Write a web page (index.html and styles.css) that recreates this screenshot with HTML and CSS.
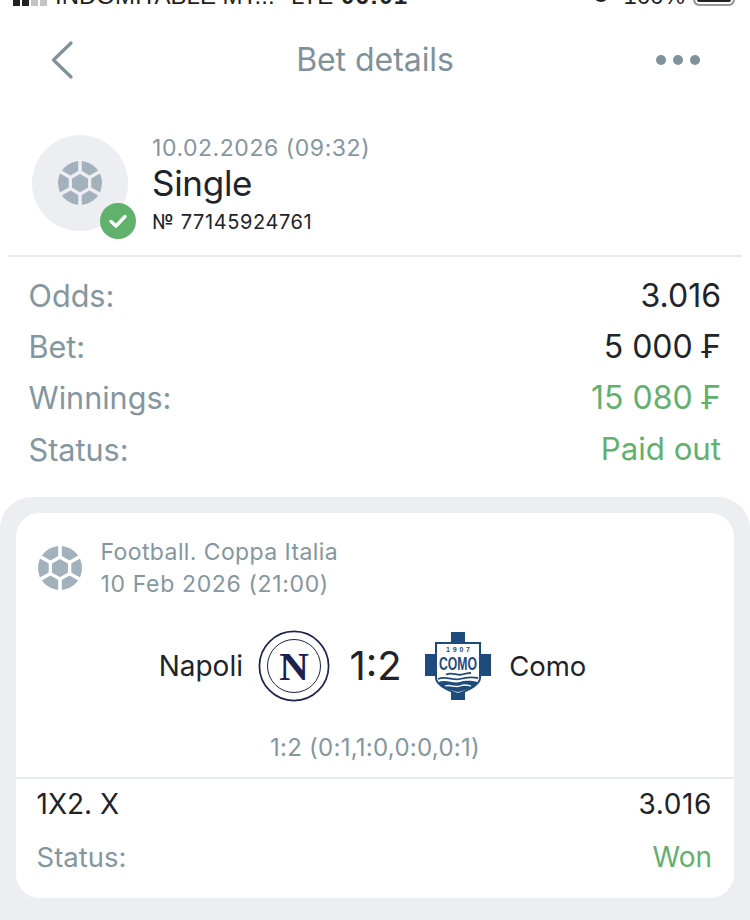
FILE: index.html
```html
<!DOCTYPE html>
<html lang="en">
<head>
<meta charset="utf-8">
<title>Bet details</title>
<link rel="stylesheet" href="styles.css">
</head>
<body>
<svg class="defs" width="0" height="0" aria-hidden="true">
  <symbol id="ball" viewBox="0 0 44 44">
    <circle cx="22" cy="22" r="22" fill="#a3b1bc"/>
    <path class="gaps" d="M22 0V11M22 33V44M2 10.5L12.5 16.5M2 33.5L12.5 27.5M42 10.5L31.5 16.5M42 33.5L31.5 27.5M22 11L31.5 16.5V27.5L22 33L12.5 27.5V16.5Z" fill="none" stroke="currentColor" stroke-width="3.6"/>
    <path d="M22 13.5L30 18V26.5L22 31L14 26.5V18Z" fill="#a3b1bc"/>
  </symbol>
</svg>

<div class="statusbar">
  <span class="signal"><i></i><i></i><i class="dim"></i><i class="dim"></i></span>
  <span class="carrier">INDOMITABLE MT...</span>
  <span class="lte">LTE</span>
  <span class="clock">06:01</span>
  <span class="spacer"></span>
  <svg class="alarm" width="16" height="20" viewBox="0 0 16 20"><circle cx="8" cy="8" r="7" fill="none" stroke="#222" stroke-width="2"/></svg>
  <span class="pct">100%</span>
  <span class="battery"></span>
</div>

<header class="topbar">
  <svg class="back" width="24" height="38" viewBox="0 0 24 38"><path d="M21 2L3.5 19L21 36" fill="none" stroke="#7f929c" stroke-width="3.2" stroke-linecap="round" stroke-linejoin="round"/></svg>
  <h1 class="title">Bet details</h1>
  <span class="dots"><i></i><i></i><i></i></span>
</header>

<section class="summary">
  <div class="avatar">
    <svg class="ball avatar-ball" width="44" height="44"><use href="#ball"/></svg>
    <span class="badge">
      <svg width="20" height="16" viewBox="0 0 20 16"><path d="M3 8.5L8 13L17 3.5" fill="none" stroke="#fff" stroke-width="3.4" stroke-linecap="round" stroke-linejoin="round"/></svg>
    </span>
  </div>
  <div class="summary-text">
    <div class="date">10.02.2026 (09:32)</div>
    <div class="type">Single</div>
    <div class="number">№ 77145924761</div>
  </div>
</section>

<dl class="facts">
  <div class="fact"><dt>Odds:</dt><dd>3.016</dd></div>
  <div class="fact"><dt>Bet:</dt><dd>5 000 ₣</dd></div>
  <div class="fact"><dt>Winnings:</dt><dd class="green">15 080 ₣</dd></div>
  <div class="fact"><dt>Status:</dt><dd class="green paid">Paid out</dd></div>
</dl>

<section class="panel">
  <article class="card">
    <div class="league">
      <svg class="ball" width="44" height="44"><use href="#ball"/></svg>
      <div class="league-text">
        <div>Football. Coppa Italia</div>
        <div class="league-date">10 Feb 2026 (21:00)</div>
      </div>
    </div>

    <div class="match">
      <span class="team">Napoli</span>
      <svg class="logo-n" width="72" height="72" viewBox="0 0 72 72">
        <circle cx="36" cy="36" r="34.6" fill="#fff" stroke="#1c2150" stroke-width="1.7"/>
        <circle cx="36" cy="36" r="26.5" fill="#fff" stroke="#1c2150" stroke-width="1"/>
        <text x="36" y="50" text-anchor="middle" class="logo-n-letter">N</text>
      </svg>
      <span class="score">1:2</span>
      <svg class="logo-c" width="66" height="68" viewBox="0 0 66 68">
        <path d="M26 0H40V22H66V44H40V68H26V44H0V22H26Z" fill="#1f4a7c"/>
        <path d="M11 11H55V46C55 53 44 58 33 62C22 58 11 53 11 46Z" fill="#fff" stroke="#1f4a7c" stroke-width="2"/>
        <text x="33" y="19.5" text-anchor="middle" class="logo-c-year" textLength="24">1907</text>
        <text x="33" y="37.5" text-anchor="middle" class="logo-c-name" textLength="38" lengthAdjust="spacingAndGlyphs">COMO</text>
        <path d="M21 42.5C27 39.5 32 44 37 42.5S43 41 46 41M13 47C21 43.5 28 49 35 47S47 45 53 46" fill="none" stroke="#1f4a7c" stroke-width="1.8"/>
        <path d="M13 50C22 47 28 52 35 50S47 49 53 50C52 54 42 58 33 60C24 58 14 54 13 50Z" fill="#1f4a7c"/>
        <path d="M20 54C26 52 30 56 35 54S42 53 46 54" fill="none" stroke="#fff" stroke-width="1.3"/>
      </svg>
      <span class="team team-away">Como</span>
    </div>

    <div class="periods">1:2 (0:1,1:0,0:0,0:1)</div>

    <div class="outcome">
      <div class="outcome-row"><span>1X2. X</span><span class="odds">3.016</span></div>
      <div class="outcome-row"><span class="muted">Status:</span><span class="green">Won</span></div>
    </div>
  </article>
</section>
</body>
</html>
```

FILE: styles.css
```css
* { box-sizing: border-box; }
html, body { margin: 0; padding: 0; }
body {
  width: 750px;
  height: 920px;
  overflow: hidden;
  background: #fff;
  color: #20242a;
  font-family: Inter, "Liberation Sans", sans-serif;
}
.defs { display: block; height: 0; }
i { display: block; }

.statusbar {
  height: 6px;
  overflow: hidden;
  display: flex;
  align-items: flex-end;
  padding: 0 15px 0 13px;
  font-family: "Liberation Sans", sans-serif;
  font-size: 24px;
  line-height: 20px;
  color: #222;
  white-space: nowrap;
}
.statusbar > span, .statusbar > svg { flex: none; }
.signal { display: flex; gap: 2px; align-items: flex-end; height: 20px; margin-right: 8px; }
.signal i { width: 7px; height: 20px; background: #222; }
.signal i.dim { background: #c4c4c4; }
.carrier { width: 215px; }
.lte { margin-left: 21px; width: 33px; }
.clock { margin-left: 17px; font-weight: 700; letter-spacing: 1.2px; }
.spacer { flex: 1 !important; }
.alarm { margin-right: 15px; }
.pct { margin-right: 8px; }
.battery {
  width: 42px;
  height: 20px;
  border: 2px solid #999;
  border-radius: 6px;
  background: #222;
  box-shadow: inset 0 0 0 2px #fff;
}

.topbar {
  height: 107px;
  padding: 0 50px;
  display: grid;
  grid-template-columns: 1fr auto 1fr;
  align-items: center;
}
.title {
  margin: 0;
  font-size: 32px;
  font-weight: 400;
  letter-spacing: -0.05px;
  color: #7f929c;
}
.dots { display: flex; gap: 7px; justify-content: flex-end; }
.dots i { width: 10px; height: 10px; border-radius: 50%; background: #7f929c; }

.summary {
  margin: 22px 8px 0;
  padding: 0 0 0 24px;
  height: 122px;
  display: flex;
  gap: 24px;
  border-bottom: 2px solid #e8eaed;
}
.avatar {
  position: relative;
  flex: none;
  width: 96px;
  height: 96px;
  border-radius: 50%;
  background: #eceef2;
  display: flex;
  align-items: center;
  justify-content: center;
}
.ball { flex: none; color: #fff; }
.avatar-ball { color: #eceef2; }
.badge {
  position: absolute;
  left: 68px;
  top: 68px;
  width: 36px;
  height: 36px;
  border-radius: 50%;
  background: #5fb16b;
  display: flex;
  align-items: center;
  justify-content: center;
}
.summary-text { display: flex; flex-direction: column; margin-top: -1px; }
.date { font-size: 23px; line-height: 28px; letter-spacing: 0.55px; color: #84969f; }
.type { font-size: 35px; line-height: 42px; letter-spacing: -0.3px; }
.number { font-size: 20px; line-height: 30px; letter-spacing: 0.6px; margin-top: 3px; }

.facts {
  margin: 13px 0 0;
  padding: 0 29px 0 28.5px;
  display: flex;
  flex-direction: column;
}
.fact {
  height: 51.2px;
  display: flex;
  justify-content: space-between;
  align-items: center;
  font-size: 30.6px;
}
.fact dt { color: #84969f; }
.fact dd { margin: 0; font-size: 32px; }
.fact dd.paid { font-size: 31.2px; }
.green { color: #62b06e; }

.panel {
  margin-top: 22px;
  height: 423px;
  padding: 16px 16px 0;
  background: #eceef2;
  border-radius: 32px 32px 0 0;
}
.card {
  height: 385px;
  background: #fff;
  border-radius: 24px;
  display: flex;
  flex-direction: column;
}
.league {
  padding: 23px 22px 0;
  display: flex;
  align-items: center;
  gap: 18.5px;
}
.league-text {
  font-size: 23px;
  line-height: 32px;
  letter-spacing: 0.4px;
  color: #84969f;
}
.league-date { letter-spacing: 0.65px; }
.match {
  margin-top: 30px;
  padding-right: 5px;
  height: 72px;
  display: flex;
  align-items: center;
  justify-content: center;
}
.team { font-size: 28px; }
.team-away { font-size: 27.5px; }
.logo-n { margin: 0 19px 0 15.5px; flex: none; }
.score { font-size: 40px; margin-right: 23px; }
.logo-c { margin-right: 18.5px; flex: none; }
.logo-n-letter { font-family: "Liberation Serif", serif; font-weight: 700; font-size: 41px; fill: #1c2150; }
.logo-c-year { font-family: "Liberation Sans", sans-serif; font-size: 7px; font-weight: 700; fill: #1f4a7c; }
.logo-c-name { font-family: "Liberation Sans", sans-serif; font-weight: 700; font-size: 19px; fill: #1f4a7c; }
.periods {
  margin-top: 32px;
  height: 28px;
  text-align: center;
  font-size: 24px;
  line-height: 28px;
  letter-spacing: 0.27px;
  color: #84969f;
}
.outcome {
  margin-top: 15px;
  border-top: 2px solid #e8eaed;
  padding: 0 22px 0 20.5px;
  display: flex;
  flex-direction: column;
  gap: 3px;
}
.outcome-row {
  height: 50px;
  display: flex;
  align-items: center;
  justify-content: space-between;
  font-size: 28px;
}
.odds { letter-spacing: 0.6px; }
.muted { color: #84969f; font-size: 27.5px; }
```
